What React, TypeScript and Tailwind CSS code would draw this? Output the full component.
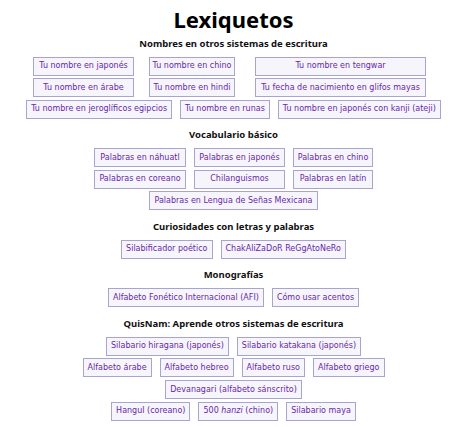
const Btn = ({ children, className = '' }: { children: React.ReactNode; className?: string }) => (
    <a className={`flex h-[19px] items-center justify-center whitespace-nowrap border-[1.5px] border-[#a9a3cf] bg-[#f6f5fc] px-[4px] text-[8px] text-[#6628a8] ${className}`}>
        {children}
    </a>
);

const Heading = ({ children, first = false }: { children: React.ReactNode; first?: boolean }) => (
    <h2 className={`mb-[6px] ${first ? 'mt-[3px]' : 'mt-[9.5px]'} text-center font-['Noto_Sans',sans-serif] text-[9.5px] font-bold leading-[14px] text-[#111]`}>
        {children}
    </h2>
);

const Row = ({ children }: { children: React.ReactNode }) => (
    <div className="flex justify-center gap-x-[8px]">{children}</div>
);

const App = () => {
    return (
        <div className="flex h-[427px] w-[467px] flex-col bg-white pt-[3.5px] font-['DejaVu_Sans',sans-serif]">
            <h1 className="text-center font-['Noto_Sans',sans-serif] text-[22px] font-bold leading-[30px] text-black">Lexiquetos</h1>

            {/* Nombres */}
            <Heading first>Nombres en otros sistemas de escritura</Heading>
            <div className="flex flex-col gap-y-[2.6px]">
                <div className="flex justify-center">
                    <div className="mr-[8px] grid grid-cols-[101px_101px_191px] gap-y-[2.6px] [&>a:nth-child(3n)]:ml-[20px] [&>a:nth-child(3n+2)]:ml-[15px]">
                        <Btn className="w-[101px]">Tu nombre en japonés</Btn>
                        <Btn className="w-[86px]">Tu nombre en chino</Btn>
                        <Btn className="w-[171px]">Tu nombre en tengwar</Btn>
                        <Btn className="w-[101px]">Tu nombre en árabe</Btn>
                        <Btn className="w-[86px]">Tu nombre en hindi</Btn>
                        <Btn className="w-[171px]">Tu fecha de nacimiento en glifos mayas</Btn>
                    </div>
                </div>
                <Row>
                    <Btn>Tu nombre en jeroglíficos egipcios</Btn>
                    <Btn>Tu nombre en runas</Btn>
                    <Btn>Tu nombre en japonés con kanji (ateji)</Btn>
                </Row>
            </div>

            {/* Vocabulario */}
            <Heading>Vocabulario básico</Heading>
            <div className="flex flex-col gap-y-[2.6px]">
                <div className="flex justify-center">
                    <div className="grid grid-cols-[92px_91px_80px] gap-x-[8px] gap-y-[2.6px]">
                        <Btn>Palabras en náhuatl</Btn>
                        <Btn>Palabras en japonés</Btn>
                        <Btn>Palabras en chino</Btn>
                        <Btn>Palabras en coreano</Btn>
                        <Btn>Chilanguismos</Btn>
                        <Btn>Palabras en latín</Btn>
                    </div>
                </div>
                <Row>
                    <Btn>Palabras en Lengua de Señas Mexicana</Btn>
                </Row>
            </div>

            <Heading>Curiosidades con letras y palabras</Heading>
            <Row>
                <Btn>Silabificador poético</Btn>
                <Btn>ChakAliZaDoR ReGgAtoNeRo</Btn>
            </Row>

            <Heading>Monografías</Heading>
            <Row>
                <Btn>Alfabeto Fonético Internacional (AFI)</Btn>
                <Btn>Cómo usar acentos</Btn>
            </Row>

            <Heading>QuisNam: Aprende otros sistemas de escritura</Heading>
            <div className="flex flex-col gap-y-[2.6px]">
                <Row>
                    <Btn>Silabario hiragana (japonés)</Btn>
                    <Btn>Silabario katakana (japonés)</Btn>
                </Row>
                <Row>
                    <Btn>Alfabeto árabe</Btn>
                    <Btn>Alfabeto hebreo</Btn>
                    <Btn>Alfabeto ruso</Btn>
                    <Btn>Alfabeto griego</Btn>
                </Row>
                <Row>
                    <Btn>Devanagari (alfabeto sánscrito)</Btn>
                </Row>
                <Row>
                    <Btn>Hangul (coreano)</Btn>
                    <Btn>
                        500&nbsp;<i>hanzi</i>&nbsp;(chino)
                    </Btn>
                    <Btn>Silabario maya</Btn>
                </Row>
            </div>
        </div>
    );
};

export default App;
